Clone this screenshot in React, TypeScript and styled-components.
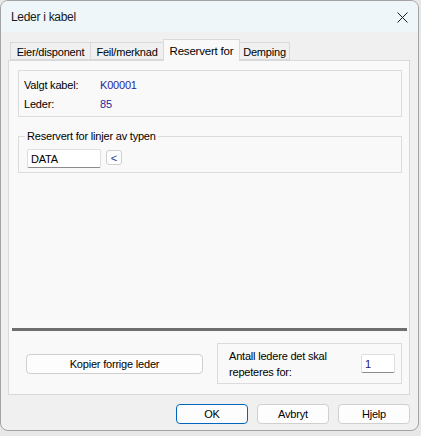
import React from 'react'
import styled, { createGlobalStyle } from 'styled-components'

const GlobalStyle = createGlobalStyle`
  html, body {
    margin: 0;
    padding: 0;
    background: #e8e8e8;
  }
  * { box-sizing: border-box; }
`

const Window = styled.div`
  width: 419px;
  height: 431px;
  border: 1px solid #a3a3a3;
  border-radius: 8px;
  overflow: hidden;
  background: #f0f0f0;
  display: flex;
  flex-direction: column;
  font-family: "Liberation Sans", Arial, sans-serif;
  font-size: 11px;
  letter-spacing: -0.2px;
  color: #000;
`

const TitleBar = styled.div`
  height: 31px;
  flex: none;
  background: #eef6f9;
  display: flex;
  align-items: center;
  justify-content: space-between;
  padding: 0 10px 0 10px;
`

const Title = styled.span`
  font-size: 12px;
  letter-spacing: -0.3px;
  color: #1a1a1a;
  margin-top: 1px;
`

const CloseButton = styled.button`
  width: 12px;
  height: 12px;
  padding: 0;
  border: none;
  background: transparent;
  display: flex;
  align-items: center;
  justify-content: center;
  margin-top: 1px;
`

const Body = styled.div`
  flex: 1;
  display: flex;
  flex-direction: column;
  padding: 7px 8px 6px 7px;
`

const TabRow = styled.div`
  display: flex;
  align-items: flex-end;
  height: 21px;
  padding-left: 2px;
  position: relative;
  z-index: 1;
`

const Tab = styled.div<{ $active?: boolean; $w: number }>`
  width: ${p => p.$w}px;
  height: ${p => (p.$active ? 22 : 18)}px;
  margin-bottom: ${p => (p.$active ? -1 : 0)}px;
  background: ${p => (p.$active ? '#f9f9f9' : '#f0f0f0')};
  border: 1px solid #d9d9d9;
  border-bottom: ${p => (p.$active ? 'none' : '1px solid #d9d9d9')};
  margin-left: -1px;
  display: flex;
  align-items: center;
  justify-content: center;
  font-size: ${p => (p.$active ? '11.5px' : '11px')};
  padding-top: ${p => (p.$active ? 0 : 1)}px;
  &:first-child { margin-left: 0; }
`

const Panel = styled.div`
  flex: 1;
  background: #f9f9f9;
  border: 1px solid #d9d9d9;
  display: flex;
  flex-direction: column;
  padding: 9px 7px 10px 9px;
`

const InfoBox = styled.div`
  border: 1px solid #dcdcdc;
  height: 47px;
  padding: 4px 0 0 5px;
  display: flex;
  flex-direction: column;
`

const InfoRow = styled.div`
  display: grid;
  grid-template-columns: 76px 1fr;
  height: 19px;
  align-items: center;
`

const Value = styled.span`
  color: #2a1f9c;
`

const Group = styled.fieldset`
  margin: 12px 0 0 0;
  padding: 6px 8px 4px 8px;
  border: 1px solid #dcdcdc;
  display: flex;
  align-items: center;
  gap: 5px;
  min-width: 0;
`

const Legend = styled.legend`
  padding: 0 2px;
  margin-left: -2px;
  line-height: 14px;
`

const TextInput = styled.input<{ $w: number }>`
  width: ${p => p.$w}px;
  height: 19px;
  border: 1px solid #dedede;
  border-bottom: 1px solid #8a8a8a;
  border-radius: 2px;
  background: #fff;
  padding: 0 3px;
  font-family: inherit;
  font-size: 11px;
  letter-spacing: -0.2px;
  color: ${p => p.color || '#000'};
  outline: none;
`

const SmallButton = styled.button`
  width: 16px;
  height: 15px;
  padding: 0;
  border: 1px solid #cfcfcf;
  border-radius: 3px;
  background: #fdfdfd;
  font-family: inherit;
  font-size: 11px;
  color: #1a3c8a;
  line-height: 12px;
  align-self: flex-start;
  margin-top: 1px;
`

const Spacer = styled.div`
  flex: 1;
`

const Separator = styled.div`
  height: 3px;
  background: #6e6e6e;
  margin: 0 -5px 12px -6px;
`

const BottomRow = styled.div`
  display: flex;
  align-items: center;
  padding-left: 8px;
  gap: 14px;
`

const Button = styled.button<{ $w: number; $default?: boolean }>`
  width: ${p => p.$w}px;
  height: 20px;
  border: 1px solid ${p => (p.$default ? '#0067c0' : '#d0d0d0')};
  border-radius: 4px;
  background: #fdfdfd;
  font-family: inherit;
  font-size: 11px;
  letter-spacing: -0.2px;
  color: #000;
  padding: 0;
`

const RepeatBox = styled.div`
  width: 185px;
  height: 41px;
  border: 1px solid #dcdcdc;
  display: flex;
  align-items: center;
  justify-content: space-between;
  padding: 0 6px 0 11px;
`

const RepeatLabel = styled.span`
  line-height: 16px;
`

const Footer = styled.div`
  display: flex;
  justify-content: flex-end;
  gap: 9px;
  margin-top: 9px;
  height: 20px;
`

const tabs = [
  { label: 'Eier/disponent', w: 81 },
  { label: 'Feil/merknad', w: 74 },
  { label: 'Reservert for', w: 77, active: true },
  { label: 'Demping', w: 51 },
]

export default function App() {
  return (
    <>
      <GlobalStyle />
      <Window>
        <TitleBar>
          <Title>Leder i kabel</Title>
          <CloseButton aria-label="Lukk">
            <svg width="11" height="11" viewBox="0 0 11 11">
              <path d="M0.5 0.5 L10.5 10.5 M10.5 0.5 L0.5 10.5" stroke="#1a1a1a" strokeWidth="1" fill="none" />
            </svg>
          </CloseButton>
        </TitleBar>
        <Body>
          <TabRow>
            {tabs.map(t => (
              <Tab key={t.label} $w={t.w} $active={t.active}>{t.label}</Tab>
            ))}
          </TabRow>
          <Panel>
            <InfoBox>
              <InfoRow>
                <span>Valgt kabel:</span>
                <Value>K00001</Value>
              </InfoRow>
              <InfoRow>
                <span>Leder:</span>
                <Value>85</Value>
              </InfoRow>
            </InfoBox>
            <Group>
              <Legend>Reservert for linjer av typen</Legend>
              <TextInput $w={74} defaultValue="DATA" />
              <SmallButton>&lt;</SmallButton>
            </Group>
            <Spacer />
            <Separator />
            <BottomRow>
              <Button $w={177}>Kopier forrige leder</Button>
              <RepeatBox>
                <RepeatLabel>Antall ledere det skal<br />repeteres for:</RepeatLabel>
                <TextInput $w={34} defaultValue="1" color="#2a1470" />
              </RepeatBox>
            </BottomRow>
          </Panel>
          <Footer>
            <Button $w={72} $default>OK</Button>
            <Button $w={72}>Avbryt</Button>
            <Button $w={72}>Hjelp</Button>
          </Footer>
        </Body>
      </Window>
    </>
  )
}
